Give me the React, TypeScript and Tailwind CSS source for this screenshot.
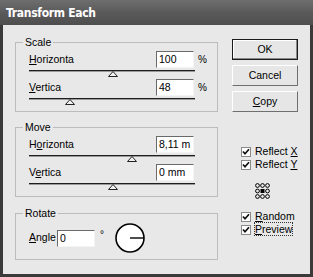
const font = { fontFamily: '"Liberation Sans", Arial, sans-serif' }

const Input = ({ value }: { value: string }) => (
    <div className="h-[17px] w-[38px] border-t border-l border-t-[#6a6a6a] border-l-[#6a6a6a] border-b border-r border-b-[#f4f4f4] border-r-[#f4f4f4] bg-white pl-[2px] text-[10.5px] leading-[15px] text-black">
        {value}
    </div>
)

const Slider = ({ pos }: { pos: number }) => (
    <div className="relative mt-[2px] h-[8px] w-[166px]">
        <div className="h-[1px] bg-[#1e1e1e]" />
        <div className="h-[1px] bg-[#9a9a9a]" />
        <svg
            className="absolute top-[1px]"
            style={{ left: pos - 5 }}
            width="10"
            height="6"
            viewBox="0 0 10 6"
        >
            <polygon points="5,0.5 9.5,5.5 0.5,5.5" fill="#f0f0f0" stroke="#222" strokeWidth="1" />
        </svg>
    </div>
)

const Row = ({
    label,
    value,
    unit,
    pos,
}: {
    label: React.ReactNode
    value: string
    unit?: string
    pos: number
}) => (
    <div className="flex flex-col">
        <div className="flex items-center">
            <div className="w-[127px] text-[10.5px]">{label}</div>
            <Input value={value} />
            {unit && <div className="ml-[4px] text-[10px]">{unit}</div>}
        </div>
        <Slider pos={pos} />
    </div>
)

const Group = ({ title, children, className }: { title: string; children: React.ReactNode; className?: string }) => (
    <fieldset className={`w-[203px] border border-[#bcbcbc] pl-[13px] ${className ?? ''}`}>
        <legend className="-ml-[6px] px-[2px] text-[10.5px] leading-[12px]">{title}</legend>
        {children}
    </fieldset>
)

const Check = ({ label }: { label: React.ReactNode }) => (
    <div className="flex h-[13px] items-center gap-[4px] text-[10.5px] leading-[13px]">
        <div className="flex h-[10px] w-[10px] items-center justify-center border border-[#8a8a8a] bg-white">
            <svg width="8" height="8" viewBox="0 0 8 8">
                <path d="M1 3.5 L3 5.8 L7 1.2" fill="none" stroke="#111" strokeWidth="1.7" />
            </svg>
        </div>
        <span>{label}</span>
    </div>
)

const Button = ({ children, primary }: { children: React.ReactNode; primary?: boolean }) => (
    <div
        className={`flex h-[21px] w-[66px] items-center justify-center bg-[#e6e6e6] text-[10.5px] ${
            primary
                ? 'border border-[#1a1a1a] shadow-[inset_-1px_-1px_0_#8a8a8a,inset_1px_1px_0_#fff]'
                : 'border border-t-[#fff] border-l-[#fff] border-b-[#6f6f6f] border-r-[#6f6f6f]'
        }`}
    >
        {children}
    </div>
)

const App = () => {
    return (
        <div className="flex h-[277px] w-[313px] flex-col bg-[#3a3a3a] text-black" style={font}>
            <div className="flex h-[25px] items-center bg-gradient-to-b from-[#6e6e6e] via-[#5a5a5a] to-[#4e4e4e] pl-[6px]">
                <span
                    className="text-[12px] font-bold tracking-[-0.3px] text-white"
                    style={{ fontFamily: '"DejaVu Sans Condensed", "Liberation Sans", sans-serif' }}
                >
                    Transform Each
                </span>
            </div>
            <div className="mx-[3px] mb-[3px] flex flex-1 bg-[#e8e8e8] pl-[12px] pt-[11px]">
                <div className="flex flex-col">
                    <Group title="Scale" className="h-[76px]">
                        <div className="mt-[3px] flex flex-col gap-[1px]">
                            <Row label={<><u>H</u>orizonta</>} value="100" unit="%" pos={84} />
                            <Row label={<><u>V</u>ertica</>} value="48" unit="%" pos={41} />
                        </div>
                    </Group>
                    <Group title="Move" className="mt-[9px] h-[76px]">
                        <div className="mt-[3px] flex flex-col gap-[1px]">
                            <Row label={<>H<u>o</u>rizonta</>} value="8,11 m" pos={103} />
                            <Row label={<>V<u>e</u>rtica</>} value="0 mm" pos={84} />
                        </div>
                    </Group>
                    <Group title="Rotate" className="mt-[10px] h-[53px]">
                        <div className="mt-[3px] flex items-center">
                            <span className="w-[28px] text-[10.5px]">
                                <u>A</u>ngle
                            </span>
                            <Input value="0" />
                            <span className="ml-[5px] -mt-[8px] text-[10px]">°</span>
                            <svg className="ml-[10px]" width="32" height="32" viewBox="0 0 32 32">
                                <circle cx="16" cy="16" r="14" fill="#fff" stroke="#000" strokeWidth="1.6" />
                                <line x1="16" y1="16" x2="30" y2="16" stroke="#000" strokeWidth="1.4" />
                            </svg>
                        </div>
                    </Group>
                </div>
                <div className="ml-[14px] flex flex-col">
                    <div className="mt-[3px] flex flex-col gap-[5px]">
                        <Button primary>OK</Button>
                        <Button>Cancel</Button>
                        <Button>
                            <span>
                                <u>C</u>opy
                            </span>
                        </Button>
                    </div>
                    <div className="ml-[9px] mt-[33px] flex flex-col">
                        <Check label={<>Reflect <u>X</u></>} />
                        <Check label={<>Reflect <u>Y</u></>} />
                    </div>
                    <div className="ml-[23px] mt-[12px]">
                        <svg width="15" height="16" viewBox="0 0 15 16">
                            {[2.5, 8, 13.5].map((y) =>
                                [2.5, 7.5, 12.5].map((x) =>
                                    x === 7.5 && y === 8 ? (
                                        <rect key={`${x}-${y}`} x="5.5" y="6" width="4" height="4" fill="#000" />
                                    ) : (
                                        <circle key={`${x}-${y}`} cx={x} cy={y} r="1.9" fill="none" stroke="#000" strokeWidth="1" />
                                    ),
                                ),
                            )}
                        </svg>
                    </div>
                    <div className="ml-[9px] mt-[11px] flex flex-col">
                        <Check label={<><u>R</u>andom</>} />
                        <Check
                            label={
                                <span className="outline outline-1 outline-dotted outline-[#333]">
                                    <u>P</u>review
                                </span>
                            }
                        />
                    </div>
                </div>
            </div>
        </div>
    )
}

export default App
